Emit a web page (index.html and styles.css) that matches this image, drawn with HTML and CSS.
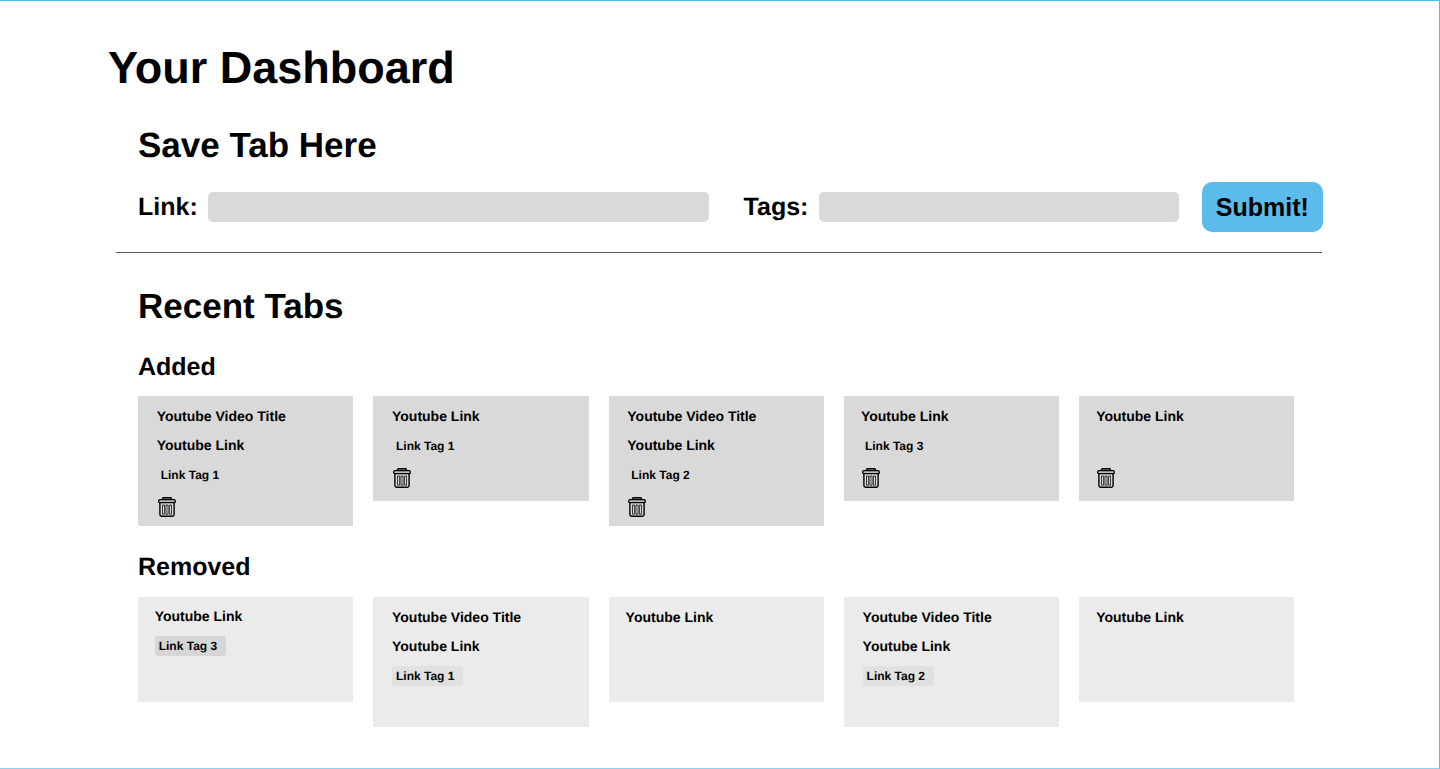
FILE: index.html
```
<!DOCTYPE html>
<html lang="en">
<head>
<meta charset="utf-8">
<title>Your Dashboard</title>
<link rel="stylesheet" href="styles.css">
</head>
<body>
<svg class="sprite" aria-hidden="true">
  <symbol id="trash" viewBox="0 0 18 20">
    <g fill="none" stroke="#000">
      <path d="M4.5 2.6V1.7Q4.5.8 5.4.8h7.2q.9 0 .9.9v.9" stroke-width="1.4" fill="#aaa"/>
      <rect x=".7" y="2.7" width="16.6" height="3" rx="1.2" stroke-width="1.3" fill="#bbb"/>
      <path d="M1.9 5.6v12q0 1.7 1.7 1.7h10.8q1.7 0 1.7-1.7v-12" stroke-width="1.4"/>
      <path d="M4.5 8h2.1v9.2H4.5zM7.95 8h2.1v9.2h-2.1zM11.4 8h2.1v9.2h-2.1z" stroke-width=".75"/>
    </g>
  </symbol>
</svg>
<main class="page">
  <h1 class="title">Your Dashboard</h1>
  <section class="save">
    <h2 class="heading">Save Tab Here</h2>
    <form class="form">
      <label class="label" for="link">Link:</label>
      <input class="field field-link" id="link">
      <label class="label" for="tags">Tags:</label>
      <input class="field field-tags" id="tags">
      <button class="submit" type="button">Submit!</button>
    </form>
  </section>
  <hr class="divider">
  <section class="recent">
    <h2 class="heading">Recent Tabs</h2>
    <h3 class="subheading">Added</h3>
    <div class="cards added">
      <article class="card tall"><p class="text">Youtube Video Title</p><p class="text">Youtube Link</p><span class="tag">Link Tag 1</span><svg class="trash"><use href="#trash"/></svg></article>
      <article class="card"><p class="text">Youtube Link</p><span class="tag">Link Tag 1</span><svg class="trash"><use href="#trash"/></svg></article>
      <article class="card tall"><p class="text">Youtube Video Title</p><p class="text">Youtube Link</p><span class="tag">Link Tag 2</span><svg class="trash"><use href="#trash"/></svg></article>
      <article class="card narrow"><p class="text">Youtube Link</p><span class="tag">Link Tag 3</span><svg class="trash"><use href="#trash"/></svg></article>
      <article class="card narrow"><p class="text">Youtube Link</p><span class="tag"></span><svg class="trash"><use href="#trash"/></svg></article>
    </div>
    <h3 class="subheading">Removed</h3>
    <div class="cards removed">
      <article class="card first"><p class="text">Youtube Link</p><span class="tag">Link Tag 3</span></article>
      <article class="card tall"><p class="text">Youtube Video Title</p><p class="text">Youtube Link</p><span class="tag">Link Tag 1</span></article>
      <article class="card narrow"><p class="text">Youtube Link</p></article>
      <article class="card tall"><p class="text">Youtube Video Title</p><p class="text">Youtube Link</p><span class="tag">Link Tag 2</span></article>
      <article class="card narrow"><p class="text">Youtube Link</p></article>
    </div>
  </section>
</main>
</body>
</html>
```
FILE: styles.css
```
* { box-sizing: border-box; margin: 0; padding: 0; }
body { background: #fff; color: #000; font-family: "Liberation Sans", Arial, sans-serif; font-weight: 700; text-rendering: geometricPrecision; }
.sprite { display: block; width: 0; height: 0; }
.page { height: 769px; padding: 42px 0 0 108px; overflow: hidden; border-top: 1px solid #55b9ea; border-right: 1px solid #a0a0a0; border-bottom: 1px solid #91d0f0; }
.title { font-size: 45px; line-height: 50px; }
.save { padding: 33px 0 0 30px; }
.heading { font-size: 35px; line-height: 40px; }
.form { display: flex; align-items: center; height: 50px; margin-top: 15.6px; }
.label { padding-top: 1px; font-size: 25px; line-height: 30px; }
.field { height: 30px; border: 0; border-radius: 5px; background: #d9d9d9; }
.field-link { width: 500.5px; margin: 0 35px 0 10.4px; }
.field-tags { width: 360.5px; margin: 0 22.7px 0 10.4px; }
.submit { width: 120.5px; height: 50px; padding-top: 1px; border: 0; border-radius: 10px; background: #5bbceb; color: #000; font: inherit; font-size: 25px; }
.divider { width: 1206px; height: 1.3px; margin: 20px 0 0 8px; border: 0; background: #555; }
.recent { padding: 34px 0 0 30px; }
.subheading { font-size: 25px; line-height: 30px; margin-top: 24.7px; }
.cards { display: grid; grid-template-columns: repeat(5, 215.3px); column-gap: 20px; align-items: start; height: 130px; margin-top: 14px; }
.card { display: flex; flex-direction: column; align-items: flex-start; gap: 9.2px; height: 105px; padding: 10px 0 0 18.7px; background: #d9d9d9; }
.tall { height: 130px; }
.narrow { padding-left: 17px; }
.text { font-size: 14px; line-height: 20px; }
.tag { width: 71px; height: 20.5px; margin-top: .8px; padding-left: 4px; border-radius: 3px; background: #d9d9d9; font-size: 12px; line-height: 20.5px; }
.trash { width: 18px; height: 20px; margin: 2.6px 0 0 1px; }
.added + .subheading { margin-top: 26px; }
.removed { margin-top: 15px; }
.removed .card { background: #ebebeb; }
.removed .tag { background: #e1e1e1; }
.removed .first { padding: 9px 0 0 16.7px; }
.removed .first .tag { background: #d6d6d6; }
```
